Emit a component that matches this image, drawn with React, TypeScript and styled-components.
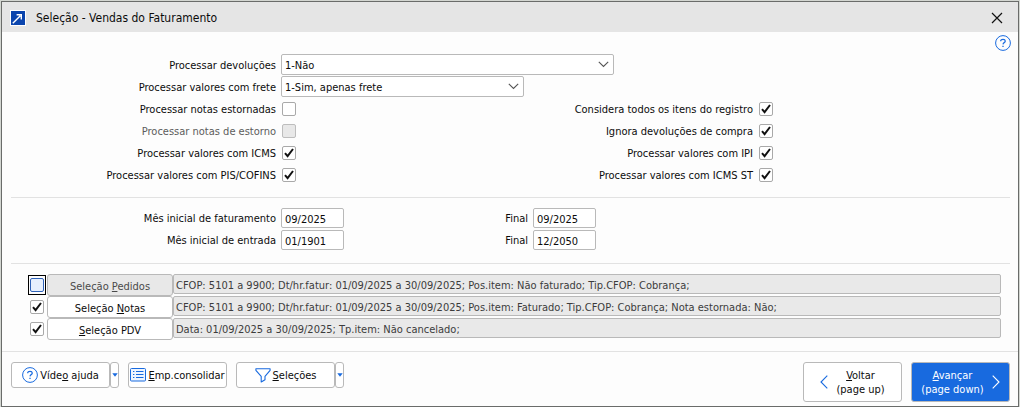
import React, { useState } from "react";
import styled, { createGlobalStyle, css } from "styled-components";

const line = "#b9b9b9";
const blue = "#186adf";

const GlobalStyle = createGlobalStyle`
  *, *::before, *::after { box-sizing: border-box; }
  body { margin: 0; background: #d3d6d1; }
  body, button, input, select {
    font-family: "DejaVu Sans Condensed", Tahoma, "DejaVu Sans", sans-serif;
    font-size: 11px;
    line-height: 14px;
    color: #0c0c0c;
  }
`;

const Window = styled.main`
  display: flex;
  flex-direction: column;
  min-height: calc(100vh - 1px);
  margin: 1px 1px 0;
  border: 1px solid #6a6c6a;
  background: #fdfdfd;
`;

const TitleBar = styled.header`
  display: flex;
  align-items: center;
  height: 30px;
  padding: 1px 13px 0 8px;
  background: #e5e5e5;
`;

const Title = styled.h1`
  flex: 1;
  margin: 0 0 0 10px;
  font-size: 12px;
  font-weight: 400;
  line-height: 16px;
`;

const IconButton = styled.button`
  display: flex;
  padding: 0;
  border: 0;
  background: none;
`;

const HelpRow = styled.div`
  display: flex;
  justify-content: flex-end;
  height: 22px;
  padding: 3px 7px 0;
`;

const Section = styled.section<{ $ruled?: boolean }>`
  margin: 0 8px 0 9px;
  padding-bottom: 12px;
  ${(p) => p.$ruled && css`border-bottom: 1px solid #e2e2e2;`}
`;

const FieldRow = styled.div`
  display: flex;
  align-items: center;
  height: 22px;
`;

const FieldLabel = styled.label<{ $width: number }>`
  width: ${(p) => p.$width}px;
  padding: 2px 5px 0 0;
  text-align: right;
  white-space: nowrap;
`;

const SelectBox = styled.span<{ $width: number }>`
  position: relative;
  align-self: flex-start;
  width: ${(p) => p.$width}px;
  height: 21px;

  svg {
    position: absolute;
    top: 7px;
    right: 5px;
    pointer-events: none;
  }
`;

const Select = styled.select`
  appearance: none;
  display: block;
  width: 100%;
  height: 21px;
  padding: 2px 20px 0 3px;
  border: 1px solid ${line};
  border-radius: 2px;
  background: #fff;
`;

const OptionGrid = styled.div`
  display: grid;
  grid-template-columns: 285px 477px;
  grid-auto-rows: 22px;
`;

const CheckLabel = styled.label<{ $muted?: boolean }>`
  display: flex;
  align-items: center;
  justify-content: flex-end;
  gap: 5px;
  ${(p) => p.$muted && css`color: #5c5c5c;`}
`;

const CheckText = styled.span`
  padding-top: 2px;
`;

const CheckBox = styled.span<{ $framed?: boolean }>`
  display: grid;
  place-items: center;
  width: 18px;
  height: 20px;
  margin: 0 -2px 0 -1px;
  border: 1px solid ${(p) => (p.$framed ? "#000" : "transparent")};

  > * { grid-area: 1 / 1; }
  svg { pointer-events: none; }
`;

const CheckInput = styled.input<{ $active?: boolean }>`
  appearance: none;
  width: 14px;
  height: 14px;
  margin: 0;
  border: 1px solid ${(p) => (p.$active ? "#2f62b8" : "#a9a9a9")};
  border-radius: 2px;
  background: ${(p) => (p.$active ? "#e6effd" : "#fff")};

  &:disabled { background: #e8e8e8; border-color: #bdbdbd; }
`;

const DateInput = styled.input`
  width: 63px;
  height: 20px;
  padding: 2px 3px 0;
  border: 1px solid ${line};
  border-radius: 2px;
  background: #fff;
`;

const PickList = styled.div`
  padding: 0 9px 0 17px;
`;

const PickRow = styled.div`
  display: flex;
  align-items: center;
  height: 22px;
  padding-left: 1px;
`;

const PickButton = styled.button`
  width: 126px;
  height: 22px;
  margin-left: 3px;
  padding: 3px 0 0;
  border: 1px solid ${line};
  border-radius: 3px;
  background: #fff;

  &:disabled { background: #e8e8e8; color: #4a4a4a; }
`;

const Summary = styled.input`
  flex: 1;
  min-width: 0;
  height: 20px;
  margin-bottom: 2px;
  padding: 2px 2px 0;
  border: 1px solid ${line};
  border-radius: 2px;
  background: #e9e9e9;
  color: #3c3c3c;
`;

const Footer = styled.footer`
  display: flex;
  align-items: flex-start;
  gap: 9px;
  flex: 1;
  padding: 10px 8px 3px 9px;
  border-top: 1px solid #e2e2e2;
`;

const SplitButton = styled.div`
  display: flex;
`;

const ToolButton = styled.button`
  display: flex;
  align-items: center;
  justify-content: center;
  gap: 2px;
  width: 99px;
  height: 26px;
  padding: 0;
  border: 1px solid ${line};
  border-radius: 3px;
  background: #fff;
  white-space: nowrap;

  span { padding-top: 2px; }
`;

const DropButton = styled(ToolButton)`
  width: 9px;
`;

const NavButton = styled.button<{ $primary?: boolean }>`
  display: flex;
  align-items: center;
  justify-content: center;
  gap: 8px;
  width: 99px;
  height: 40px;
  padding: 0;
  border: 1px solid ${line};
  border-radius: 3px;
  background: ${(p) => (p.$primary ? blue : "#fff")};
  color: ${(p) => (p.$primary ? "#fff" : "#0c0c0c")};

  span { padding-top: 2px; }
`;

const Spacer = styled.div`
  flex: 1;
`;

const Chevron = () => (
  <svg width="11" height="7" viewBox="0 0 11 7" fill="none" stroke="#555" strokeWidth="1.1">
    <path d="M.8.8 5.5 5.5 10.2.8" />
  </svg>
);

const Tick = () => (
  <svg width="10" height="10" viewBox="0 0 10 10" fill="none" stroke="#111" strokeWidth="2">
    <path d="M1 5.2 3.6 8.2 9 1" />
  </svg>
);

const HelpIcon = ({ size }: { size: number }) => (
  <svg width={size} height={size} viewBox="0 0 16 16" fill="none" stroke={blue} strokeWidth="1">
    <circle cx="8" cy="8" r="7.4" />
    <path d="M5.7 6.3V5.6Q5.9 4.3 8 4.3T10.3 6Q10.3 7 9.2 7.6T8 9.4" strokeWidth="1.2" />
    <path d="M8 10.8v1.3" strokeWidth="1.3" />
  </svg>
);

const ListIcon = () => (
  <svg width="16" height="14" viewBox="0 0 16 14" fill="none" stroke={blue}>
    <rect x=".5" y=".5" width="15" height="12.5" rx="1" fill="#eef5ff" />
    <path d="M3 3.5h1.4M3 6.5h1.4M3 9.5h1.4M6 3.5h7.5M6 6.5h7.5M6 9.5h7.5" />
  </svg>
);

const FunnelIcon = () => (
  <svg width="16" height="15" viewBox="0 0 16 15" fill="none" stroke={blue} strokeWidth="1.1">
    <path d="M.9.7h14.2v1.6L10 8.3v3.4L6.2 14V8.3L.9 2.3z" strokeLinejoin="round" />
  </svg>
);

const CaretIcon = () => (
  <svg width="6" height="4" viewBox="0 0 6 4" fill={blue}>
    <path d="M.3.3h5.4L3 3.7z" />
  </svg>
);

const ArrowIcon = ({ dir }: { dir: "left" | "right" }) => (
  <svg width="8" height="14" viewBox="0 0 8 14" fill="none" stroke={dir === "left" ? blue : "#fff"} strokeWidth="1.1">
    <path d={dir === "left" ? "M7.3.7 1 7l6.3 6.3" : "M.7.7 7 7 .7 13.3"} />
  </svg>
);

const AppIcon = () => (
  <svg width="16" height="16" viewBox="0 0 16 16">
    <rect width="16" height="16" fill="#fff" />
    <rect x="1" y="1" width="14" height="14" fill="#0b45ae" />
    <path d="M2.8 13.2 10.3 5.7M6.6 4.8h4.7v4.7" stroke="#fff" strokeWidth="1.4" fill="none" />
  </svg>
);

type CheckProps = { checked?: boolean; disabled?: boolean; framed?: boolean; label?: string };

function Check({ checked = false, disabled, framed, label }: CheckProps) {
  const [on, setOn] = useState(checked);
  return (
    <CheckBox $framed={framed}>
      <CheckInput
        type="checkbox"
        checked={on}
        disabled={disabled}
        $active={framed}
        aria-label={label}
        onChange={(e) => setOn(e.target.checked)}
      />
      {on && <Tick />}
    </CheckBox>
  );
}

const options = [
  { text: "Processar notas estornadas" },
  { text: "Considera todos os itens do registro", checked: true },
  { text: "Processar notas de estorno", disabled: true },
  { text: "Ignora devoluções de compra", checked: true },
  { text: "Processar valores com ICMS", checked: true },
  { text: "Processar valores com IPI", checked: true },
  { text: "Processar valores com PIS/COFINS", checked: true },
  { text: "Processar valores com ICMS ST", checked: true },
];

const periods = [
  { id: "fat", text: "Mês inicial de faturamento", from: "09/2025", to: "09/2025" },
  { id: "ent", text: "Mês inicial de entrada", from: "01/1901", to: "12/2050" },
];

const picks = [
  {
    id: "pedidos",
    label: <>Seleção <u>P</u>edidos</>,
    off: true,
    summary: "CFOP: 5101 a 9900; Dt/hr.fatur: 01/09/2025 a 30/09/2025; Pos.item: Não faturado; Tip.CFOP: Cobrança;",
  },
  {
    id: "notas",
    label: <>Seleção <u>N</u>otas</>,
    off: false,
    summary: "CFOP: 5101 a 9900; Dt/hr.fatur: 01/09/2025 a 30/09/2025; Pos.item: Faturado; Tip.CFOP: Cobrança; Nota estornada: Não;",
  },
  {
    id: "pdv",
    label: <><u>S</u>eleção PDV</>,
    off: false,
    summary: "Data: 01/09/2025 a 30/09/2025; Tp.item: Não cancelado;",
  },
];

const OptionsSection = styled(Section)`
  padding-bottom: 11px;
`;

const PeriodSection = styled(Section)`
  padding-top: 9px;
`;

const PickSection = styled(Section)`
  padding-top: 10px;
  padding-bottom: 11px;
`;

export default function App() {
  return (
    <>
      <GlobalStyle />
      <Window>
        <TitleBar>
          <AppIcon />
          <Title>Seleção - Vendas do Faturamento</Title>
          <IconButton aria-label="Fechar">
            <svg width="16" height="16" viewBox="0 0 16 16" stroke="#111" strokeWidth="1.2">
              <path d="M3 3l10 10M13 3 3 13" />
            </svg>
          </IconButton>
        </TitleBar>

        <HelpRow>
          <IconButton aria-label="Ajuda"><HelpIcon size={16} /></IconButton>
        </HelpRow>

        <OptionsSection $ruled>
          <FieldRow>
            <FieldLabel $width={270} htmlFor="devolucoes">Processar devoluções</FieldLabel>
            <SelectBox $width={333}>
              <Select id="devolucoes"><option>1-Não</option></Select>
              <Chevron />
            </SelectBox>
          </FieldRow>
          <FieldRow>
            <FieldLabel $width={270} htmlFor="frete">Processar valores com frete</FieldLabel>
            <SelectBox $width={243}>
              <Select id="frete"><option>1-Sim, apenas frete</option></Select>
              <Chevron />
            </SelectBox>
          </FieldRow>
          <OptionGrid>
            {options.map((o) => (
              <CheckLabel key={o.text} $muted={o.disabled}>
                <CheckText>{o.text}</CheckText>
                <Check checked={o.checked} disabled={o.disabled} />
              </CheckLabel>
            ))}
          </OptionGrid>
        </OptionsSection>

        <PeriodSection $ruled>
          {periods.map((p) => (
            <FieldRow key={p.id}>
              <FieldLabel $width={270} htmlFor={p.id + "-de"}>{p.text}</FieldLabel>
              <DateInput id={p.id + "-de"} defaultValue={p.from} />
              <FieldLabel $width={189} htmlFor={p.id + "-ate"}>Final</FieldLabel>
              <DateInput id={p.id + "-ate"} defaultValue={p.to} />
            </FieldRow>
          ))}
        </PeriodSection>

        <PickSection>
          <PickList>
            {picks.map((p) => (
              <PickRow key={p.id}>
                <Check checked={!p.off} framed={p.off} label={"Ativar seleção " + p.id} />
                <PickButton disabled={p.off}>{p.label}</PickButton>
                <Summary readOnly aria-label={"Filtro " + p.id} value={p.summary} />
              </PickRow>
            ))}
          </PickList>
        </PickSection>

        <Footer>
          <SplitButton>
            <ToolButton><HelpIcon size={16} /><span>Víde<u>o</u> ajuda</span></ToolButton>
            <DropButton aria-label="Mais vídeos"><CaretIcon /></DropButton>
          </SplitButton>
          <ToolButton><ListIcon /><span><u>E</u>mp.consolidar</span></ToolButton>
          <SplitButton>
            <ToolButton><FunnelIcon /><span><u>S</u>eleções</span></ToolButton>
            <DropButton aria-label="Mais seleções"><CaretIcon /></DropButton>
          </SplitButton>
          <Spacer />
          <NavButton><ArrowIcon dir="left" /><span><u>V</u>oltar<br />(page up)</span></NavButton>
          <NavButton $primary><span><u>A</u>vançar<br />(page down)</span><ArrowIcon dir="right" /></NavButton>
        </Footer>
      </Window>
    </>
  );
}
